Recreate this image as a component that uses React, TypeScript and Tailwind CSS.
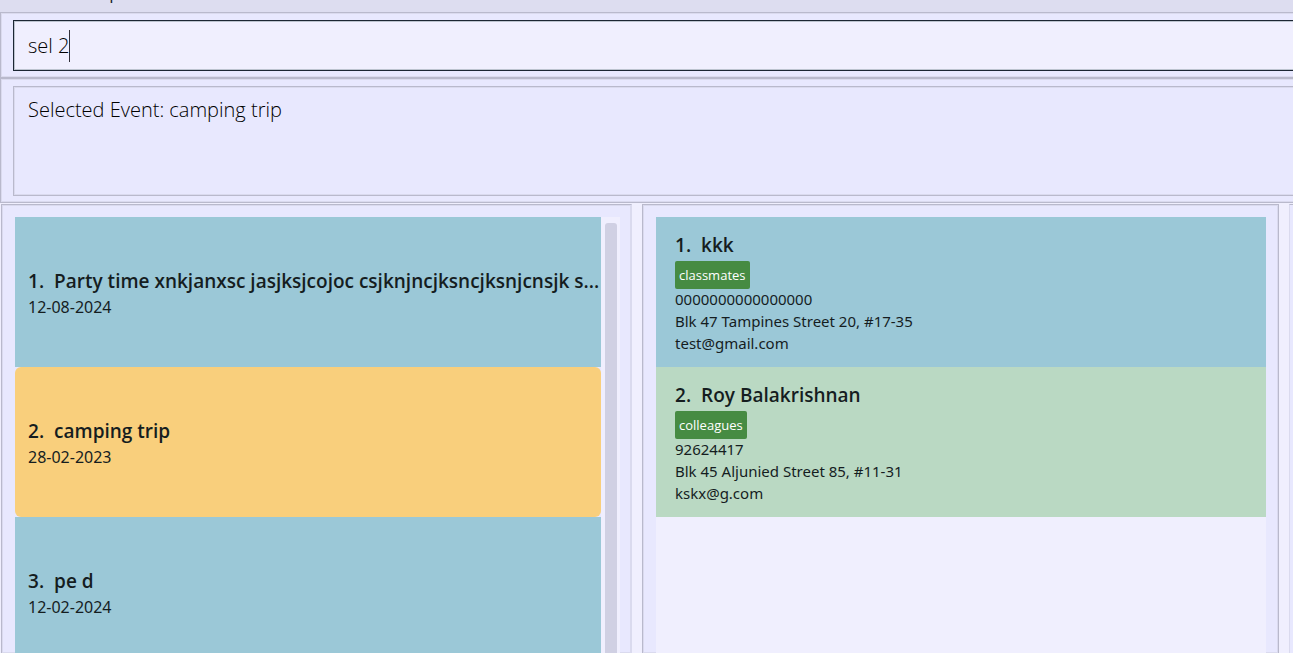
import { useState } from "react";

type EventItem = { name: string; date: string };
type Person = { name: string; tag: string; phone: string; address: string; email: string };

const events: EventItem[] = [
  { name: "Party time xnkjanxsc jasjksjcojoc csjknjncjksncjksnjcnsjk s...", date: "12-08-2024" },
  { name: "camping trip", date: "28-02-2023" },
  { name: "pe d", date: "12-02-2024" },
];

const people: Person[] = [
  {
    name: "kkk",
    tag: "classmates",
    phone: "0000000000000000",
    address: "Blk 47 Tampines Street 20, #17-35",
    email: "test@gmail.com",
  },
  {
    name: "Roy Balakrishnan",
    tag: "colleagues",
    phone: "92624417",
    address: "Blk 45 Aljunied Street 85, #11-31",
    email: "kskx@g.com",
  },
];

const pane = "border border-[#b9b9cc] bg-[#e8e8fe] shadow-[inset_0_0_0_1px_#dadaee]";

function EventCard({ item, index, selected }: { item: EventItem; index: number; selected: boolean }) {
  return (
    <li
      aria-current={selected}
      className={
        "flex h-[150px] shrink-0 flex-col justify-center pt-[2px] pl-[13px] " +
        (selected ? "rounded-md bg-[#f9cf7c]" : "bg-[#9bc8d7]")
      }
    >
      <h2 className="flex gap-2.5 text-[19px] leading-[28px] font-semibold whitespace-nowrap">
        <span>{index}.</span>
        <span>{item.name}</span>
      </h2>
      <p className="font-['Noto_Sans',sans-serif] text-[16px] leading-[24px]">{item.date}</p>
    </li>
  );
}

function PersonCard({ person, index }: { person: Person; index: number }) {
  return (
    <li
      className={
        "flex h-[150px] shrink-0 flex-col items-start px-[19px] pt-[14px] " +
        (index % 2 ? "bg-[#9bc8d7]" : "bg-[#bad9c3]")
      }
    >
      <h2 className="flex gap-2.5 text-[19px] leading-[28px] font-semibold whitespace-nowrap">
        <span>{index}.</span>
        <span>{person.name}</span>
      </h2>
      <span className="mt-[2px] rounded-[2px] bg-[#468b42] px-1 text-[13px] leading-[28px] text-white">{person.tag}</span>
      <div className="-mt-px font-['Noto_Sans',sans-serif] text-[15px] leading-[22px]">
        <p>{person.phone}</p>
        <p>{person.address}</p>
        <p>{person.email}</p>
      </div>
    </li>
  );
}

export default function App() {
  const [command, setCommand] = useState("sel 2");
  return (
    <div className="flex h-screen flex-col overflow-hidden bg-[#f0effe] font-['Open_Sans','Noto_Sans',sans-serif] text-[#151d1f]">
      <nav className="flex h-3 shrink-0 items-end overflow-hidden bg-[#ddddf0] pb-[7px] pl-[83px]">
        <button type="button" className="text-[17px] leading-[24px]">
          Help
        </button>
      </nav>

      <div className={"-mr-3 h-[66px] shrink-0 py-[7px] pl-3 " + pane}>
        <div className="flex h-[51px] items-center border border-[#1c2633] bg-[#f0effe] pl-[14px] text-[20px] font-light text-black shadow-[inset_0_0_0_1px_#bcc3cf]">
          <input
            aria-label="Command"
            value={command}
            onChange={(e) => setCommand(e.target.value)}
            className="field-sizing-content bg-transparent leading-[32px] outline-none"
          />
          <span aria-hidden="true" className="h-8 w-px bg-[#30303a]" />
        </div>
      </div>

      <div className={"-mr-3 h-[125px] shrink-0 py-[7px] pl-3 " + pane}>
        <output className={"block h-[110px] pt-[7px] pl-[14px] text-[20px] leading-[32px] font-light text-black " + pane}>
          Selected Event: camping trip
        </output>
      </div>

      <main className="mt-px grid min-h-0 flex-1 grid-cols-[631fr_637fr_4fr] gap-2.5 pl-px">
        <section aria-label="Events" className={"flex min-w-0 overflow-hidden border-b-0 border-r-[#dadaee] pt-3 pr-[11px] pl-[13px] " + pane}>
          <ul className="flex min-w-0 flex-1 flex-col">
            {events.map((item, i) => (
              <EventCard key={item.name} item={item} index={i + 1} selected={i === 1} />
            ))}
          </ul>
          <div className="flex w-[19px] shrink-0 bg-[#f0effe] pt-[6px] pr-[3px] pl-1">
            <div className="flex-1 rounded-t-[3px] bg-[#d0d0e3]" />
          </div>
        </section>

        <section aria-label="Persons" className={"min-w-0 overflow-hidden border-b-0 pt-3 pr-[12px] pl-[13px] " + pane}>
          <ul className="flex h-full flex-col bg-[#f0effe]">
            {people.map((person, i) => (
              <PersonCard key={person.name} person={person} index={i + 1} />
            ))}
          </ul>
        </section>

        <div className="border-t border-l border-t-[#b9b9cc] border-l-[#dadaee] bg-[#e8e8fe]" />
      </main>
    </div>
  );
}
